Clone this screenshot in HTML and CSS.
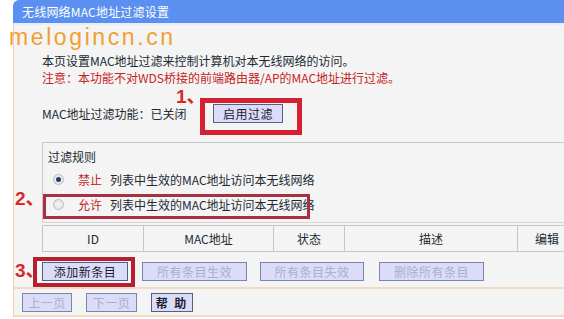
FILE: index.html
```html
<!DOCTYPE html>
<html lang="zh-CN">
<head>
<meta charset="utf-8">
<title>无线网络MAC地址过滤设置</title>
<link rel="stylesheet" href="styles.css">
</head>
<body>
<div class="win">
  <div class="title">无线网络MAC地址过滤设置</div>
  <div class="panel">
    <div class="content">
      <p class="line">本页设置MAC地址过滤来控制计算机对本无线网络的访问。</p>
      <p class="line warn">注意：本功能不对WDS桥接的前端路由器/AP的MAC地址进行过滤。</p>
      <div class="status">
        <span class="status-label">MAC地址过滤功能：已关闭</span>
        <button class="btn btn-enable">启用过滤</button>
      </div>
      <div class="rules">
        <div class="rules-title">过滤规则</div>
        <div class="rule"><span class="radio on"></span><span class="red">禁止</span><span>列表中生效的MAC地址访问本无线网络</span></div>
        <div class="rule"><span class="radio"></span><span class="red">允许</span><span>列表中生效的MAC地址访问本无线网络</span></div>
      </div>
      <div class="grid">
        <div class="cell c-id">ID</div>
        <div class="cell c-mac">MAC地址</div>
        <div class="cell c-state">状态</div>
        <div class="cell c-desc">描述</div>
        <div class="cell c-edit">编辑</div>
      </div>
      <div class="actions">
        <button class="btn w-add">添加新条目</button>
        <button class="btn off w-all">所有条目生效</button>
        <button class="btn off w-none">所有条目失效</button>
        <button class="btn off w-del">删除所有条目</button>
      </div>
    </div>
    <div class="footer">
      <button class="btn off w-prev">上一页</button>
      <button class="btn off w-next">下一页</button>
      <button class="btn w-help">帮 助</button>
    </div>
  </div>
</div>

<div class="watermark">melogincn.cn</div>
<div class="mark mark-1">1、</div>
<div class="mark mark-2">2、</div>
<div class="mark mark-3">3、</div>
<div class="box box-1"></div>
<div class="box box-2"></div>
<div class="box box-3"></div>
</body>
</html>
```

FILE: styles.css
```css
html, body {
  margin: 0;
  padding: 0;
}
body {
  width: 564px;
  height: 319px;
  overflow: hidden;
  background: #ffffff;
  position: relative;
  font-family: "Noto Sans CJK SC", "DejaVu Sans", sans-serif;
  font-size: 12px;
  color: #222a33;
}
.win {
  margin-left: 13px;
  width: 620px;
}
.title {
  height: 23px;
  line-height: 23px;
  background: #5b8ff0;
  border-top-left-radius: 6px;
  color: #ffffff;
  padding-left: 9px;
  letter-spacing: 0.2px;
}
.panel {
  background: #f4f4f4;
  border-left: 1px solid #ecd2b0;
  border-top: 2px solid #e6eefa;
}
.content {
  padding: 27px 0 6px 28px;
}
.line {
  margin: 0;
  line-height: 17px;
  height: 17px;
  white-space: nowrap;
}
.warn {
  color: #c42424;
}
.status {
  margin-top: 18px;
  display: flex;
  align-items: center;
  height: 19px;
}
.status-label {
  width: 171px;
}
.btn {
  font-family: "Noto Sans CJK SC", "DejaVu Sans", sans-serif;
  font-size: 12px;
  height: 19px;
  padding: 0;
  margin: 0;
  background: #dadcf8;
  border: 1px solid #5a5e7e;
  color: #1e2230;
  line-height: 16px;
  letter-spacing: 0.5px;
}
.btn.off {
  color: #a8b0cc;
  border-color: #7c84aa;
}
.btn-enable { width: 70px; }
.rules {
  margin-top: 19px;
  border-top: 1px solid #c9c9c9;
  border-left: 1px solid #c9c9c9;
  border-bottom: 1px solid #d6d6d6;
  padding: 5px 0 5px 5px;
}
.rules-title {
  line-height: 17px;
  height: 17px;
}
.rule {
  display: flex;
  align-items: center;
  height: 25px;
  white-space: nowrap;
}
.rules-title + .rule { margin-top: 2px; }
.radio {
  width: 9px;
  height: 9px;
  border-radius: 50%;
  border: 1px solid #b8bcc4;
  background: radial-gradient(circle, #f4f4f4 0, #dcdfe4 100%);
  margin-left: 5px;
  margin-right: 14px;
  display: flex;
  align-items: center;
  justify-content: center;
}
.radio.on::after {
  content: "";
  width: 5px;
  height: 5px;
  border-radius: 50%;
  background: #2a3c6a;
}
.red {
  color: #c42424;
  margin-right: 8px;
}
.grid {
  margin-top: 2px;
  display: flex;
  height: 25px;
  border-top: 1px solid #c6c6c6;
  border-bottom: 1px solid #c6c6c6;
  border-left: 1px solid #c6c6c6;
}
.cell {
  border-right: 1px solid #c6c6c6;
  display: flex;
  align-items: center;
  justify-content: center;
  flex: none;
}
.c-id { width: 100px; }
.c-mac { width: 129px; }
.c-state { width: 70px; }
.c-desc { width: 172px; }
.c-edit { width: 80px; justify-content: flex-start; padding-left: 17px; }
.actions {
  margin-top: 10px;
  display: flex;
  gap: 14px;
}
.w-add { width: 86px; }
.w-all { width: 105px; }
.w-none { width: 104px; margin-left: -1px; }
.w-del { width: 105px; margin-left: 1px; }
.footer {
  border-top: 2px solid #f0dcc4;
  border-bottom: 2px solid #f0dcc4;
  padding: 4px 0 3px 8px;
  display: flex;
  gap: 14px;
}
.w-prev { width: 50px; }
.w-next { width: 51px; }
.w-help { width: 42px; font-weight: bold; letter-spacing: 2px; }

.watermark {
  position: absolute;
  left: 9px;
  top: 22px;
  font-family: "Liberation Sans", sans-serif;
  font-size: 23px;
  letter-spacing: 2.6px;
  color: #f0a030;
  line-height: 30px;
}
.mark {
  position: absolute;
  font-family: "Liberation Sans", "Noto Sans CJK SC", sans-serif;
  font-weight: bold;
  font-size: 19px;
  color: #d42a2a;
  line-height: 20px;
}
.mark-1 { left: 176px; top: 87px; }
.mark-2 { left: 15px; top: 189px; }
.mark-3 { left: 15px; top: 261px; }
.box {
  position: absolute;
  box-sizing: border-box;
}
.box-1 {
  left: 200px; top: 98px; width: 102px; height: 37px;
  border: 5px solid #d42030;
}
.box-2 {
  left: 43px; top: 194px; width: 267px; height: 25px;
  border: 3px solid #a83040;
}
.box-3 {
  left: 33px; top: 257px; width: 102px; height: 30px;
  border: 4px solid #b42030;
}
```
